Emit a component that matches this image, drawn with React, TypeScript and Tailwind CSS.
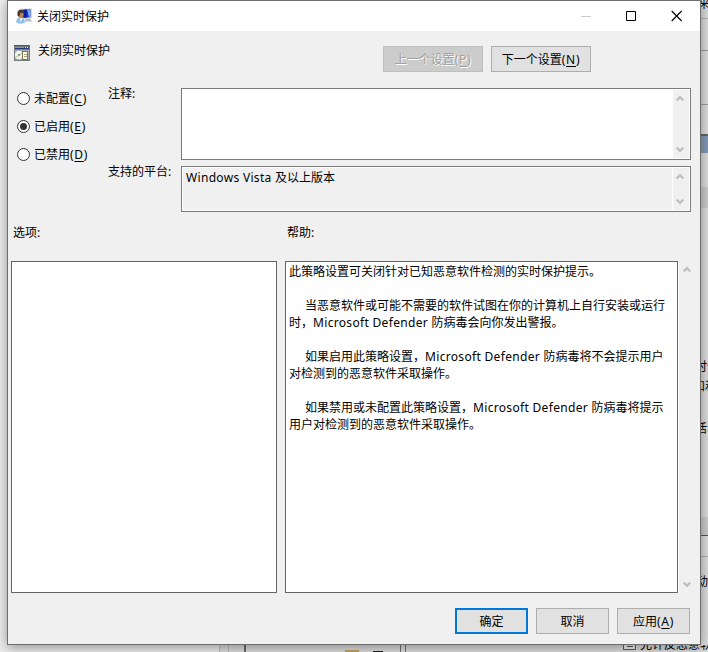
import React from 'react';
import clsx from 'clsx';

interface AccessLabelProps {
  text: string;
  accessKey: string;
}

const AccessLabel: React.FC<AccessLabelProps> = ({ text, accessKey }) => (
  <span className="whitespace-pre">
    {text}
    <span className="tracking-[0.7px]">
      (<span className="underline underline-offset-2">{accessKey}</span>)
    </span>
  </span>
);

interface DialogButtonProps {
  children: React.ReactNode;
  className?: string;
  variant?: 'normal' | 'primary' | 'disabled';
}

const DialogButton: React.FC<DialogButtonProps> = ({ children, className, variant = 'normal' }) => (
  <button
    disabled={variant === 'disabled'}
    className={clsx(
      'flex h-[26px] items-center justify-center',
      variant === 'normal' && 'border border-[#adadad] bg-[#e1e1e1]',
      variant === 'primary' && 'border-2 border-[#0078d7] bg-[#e1e1e1]',
      variant === 'disabled' &&
        'border border-[#bfbfbf] bg-[#cccccc] text-[#a0a0a0] [text-shadow:1px_1px_0_#ffffff]',
      className
    )}
  >
    {children}
  </button>
);

const Chevron: React.FC<{ down?: boolean }> = ({ down }) => (
  <svg width="8" height="7" viewBox="0 0 8 7" className={clsx('shrink-0', down && 'rotate-180')}>
    <path d="M0.7 5.4 4 2.1 7.3 5.4" fill="none" stroke="#bfbfbf" strokeWidth="2.3" />
  </svg>
);

interface RadioProps {
  text: string;
  accessKey: string;
  checked?: boolean;
}

const Radio: React.FC<RadioProps> = ({ text, accessKey, checked }) => (
  <label className="flex h-7 items-center gap-1">
    <span className="flex size-[13px] items-center justify-center rounded-full border border-[#333333] bg-white">
      {checked && <span className="size-[7px] rounded-full bg-[#333333]" />}
    </span>
    <AccessLabel text={text} accessKey={accessKey} />
  </label>
);

const PolicyIcon = () => (
  <svg width="16" height="16" viewBox="0 0 16 16">
    <path d="M4 0.8 15.8 0.3v10L5 11z" fill="#d5d9df" />
    <path d="M5.5 1.8 14.7 1.2v8.1L6 9.8z" fill="#1238c8" />
    <path d="M11 1.5 14.7 1.2v8.1L13 9.4z" fill="#82a6f2" />
    <path d="M8 1.7h3l-.5 8H8z" fill="#0a1fa0" />
    <path d="M9 10.5h5l2 3H9z" fill="#b9bdc5" />
    <path d="M0.3 14.5c0-4 1.7-5 4.2-5s4.3 1.5 4.5 5c-2 1.5-6.5 1.5-8.7 0z" fill="#8cc0e6" />
    <path d="m3.8 10 1 4.5 1.6-4.5z" fill="#f4f8fb" />
    <ellipse cx="4.8" cy="6.4" rx="2.7" ry="3.7" fill="#b98352" />
    <path d="M1.7 8C0.8 3.7 2.3 1.6 4.8 1.8c2.2.1 3 1.6 2.7 3.2L4.4 4.8 3.3 8.6z" fill="#4a3526" />
  </svg>
);

const SettingIcon = () => (
  <svg width="16" height="16" viewBox="0 0 16 16" shapeRendering="crispEdges">
    <path d="M0 0h16v16H0z" fill="#737b80" />
    <path d="M0 0h16v1H0z" fill="#355f70" />
    <path d="M1 2h14v2H1z" fill="#26387e" />
    <path d="M1 2h9v1H1z" fill="#8791bd" />
    <path d="M11 2h1v1h-1zM13 2h1v1h-1z" fill="#ffffff" />
    <path d="M1 5h14v10H1z" fill="#a9afae" />
    <circle cx="5" cy="10" r="4.2" fill="#f1f4ea" shapeRendering="auto" />
    <path d="m5 10 2-3 1 2zM5 10l-3 1 1 2z" fill="#bad4ab" />
    <path d="M4 9h2v2H4z" fill="#8b9599" />
    <path d="M8 6h6v9H8z" fill="#7b7551" />
    <path d="M9 7h4v7H9z" fill="#fffbe5" />
    <path d="M10 9h3v1h-3zM10 11h3v1h-3z" fill="#a6a07e" />
  </svg>
);

interface ScrollBoxProps {
  children?: React.ReactNode;
  className?: string;
}

const ScrollBox: React.FC<ScrollBoxProps> = ({ children, className }) => (
  <div className={clsx('flex border border-[#7a7a7a] bg-white p-px', className)}>
    {children}
    <div className="flex w-4 shrink-0 flex-col items-center justify-between bg-[#f0f0f0] py-[5px] pr-0.5">
      <Chevron />
      <Chevron down />
    </div>
  </div>
);

// Latin runs are set a little wider than the Chinese around them
const MixedText: React.FC<{ text: string }> = ({ text }) => (
  <>
    {text.split(/([A-Za-z ]+)/).map((part, i) => (
      <span key={i} className={clsx(i % 2 === 1 && 'tracking-[0.32px]')}>
        {part}
      </span>
    ))}
  </>
);

const helpLines = [
  { text: '此策略设置可关闭针对已知恶意软件检测的实时保护提示。' },
  { text: '' },
  { text: '当恶意软件或可能不需要的软件试图在你的计算机上自行安装或运行', indent: true },
  { text: '时，Microsoft Defender 防病毒会向你发出警报。' },
  { text: '' },
  { text: '如果启用此策略设置，Microsoft Defender 防病毒将不会提示用户', indent: true },
  { text: '对检测到的恶意软件采取操作。' },
  { text: '' },
  { text: '如果禁用或未配置此策略设置，Microsoft Defender 防病毒将提示', indent: true },
  { text: '用户对检测到的恶意软件采取操作。' },
];

// Windows lying behind the dialog, visible only along its edges
const Backdrop = () => (
  <div className="absolute inset-0">
    <div className="absolute top-0 right-0 flex h-full w-2 flex-col overflow-hidden bg-[#dedede]">
      <div className="h-[19px] shrink-0 border-b border-[#b5b5b5] leading-[8px]">
        <span className="-ml-0.5">来</span>
      </div>
      <div className="h-[32px] shrink-0 border-b border-[#9b9b9b]" />
      <div className="h-[54px] shrink-0 border-b border-[#9b9b9b]" />
      <div className="h-[31px] shrink-0 border-b-2 border-[#666666]" />
      <div className="h-[17px] shrink-0 bg-[#839bb8]" />
      <div className="h-[34px] shrink-0" />
      <div className="h-[21px] shrink-0 bg-[#cccccc]" />
      <div className="h-[150px] shrink-0" />
      <div className="h-[20px] shrink-0 whitespace-nowrap"><span className="-ml-[5px]">时使</span></div>
      <div className="h-[42px] shrink-0 whitespace-nowrap"><span className="-ml-[7px]">和和</span></div>
      <div className="h-[97px] shrink-0 whitespace-nowrap"><span className="-ml-[5px]">活动</span></div>
      <div className="h-[19px] shrink-0 border-b border-[#555555] bg-[#cccccc]" />
      <div className="h-[21px] shrink-0 border-b border-[#b0b0b0]" />
      <div className="h-[16px] shrink-0" />
      <div className="h-[20px] shrink-0 whitespace-nowrap"><span className="-ml-1">动</span></div>
    </div>
    <div className="absolute bottom-0 left-0 flex h-[7px] w-full overflow-hidden bg-[#dcdcdc]">
      <div className="w-[220px] shrink-0 border-r border-[#bbbbbb] bg-[#ececec]" />
      <div className="w-[9px] shrink-0 border-r border-[#bbbbbb]" />
      <div className="w-[17px] shrink-0 border-r-2 border-[#6b6b70]" />
      <div className="mt-[5px] ml-[99px] h-0.5 w-3.5 shrink-0 bg-[#c7a260]" />
      <div className="mt-[6px] ml-[14px] h-px w-2.5 shrink-0 bg-[#222222]" />
      <div className="ml-[17px] w-[6px] shrink-0 border-x border-[#707078]" />
      <div className="ml-[217px] h-[5px] w-[13px] shrink-0 border border-t-0 border-[#606060] bg-[#eeeeee]">
        <div className="mt-px ml-[3px] h-px w-1.5 bg-[#555555]" />
      </div>
      <div className="-mt-[9px] ml-1 shrink-0 whitespace-nowrap">允许反恶意软件</div>
    </div>
  </div>
);

const App: React.FC = () => {
  return (
    <div className="relative h-[652px] w-[708px] overflow-hidden bg-[#efefef] pl-[7px] font-['Noto_Sans','Noto_Sans_CJK_SC',sans-serif] text-[12px] leading-[17px] text-black">
      <Backdrop />
      <div className="relative flex h-[645px] w-[694px] flex-col border border-[#6e6e6e] bg-[#f0f0f0] shadow-[0_2px_12px_rgba(0,0,0,0.4)]">
        <header className="flex h-[30px] shrink-0 items-center bg-white pr-[18px] pl-2">
          <PolicyIcon />
          <h1 className="ml-[5px] grow">关闭实时保护</h1>
          <svg width="102" height="12" viewBox="0 0 102 12" fill="none" className="-mt-px">
            <path d="M1 6.5h10" stroke="#cccccc" />
            <path d="M46.5 1.5h9v9h-9z" stroke="#000000" />
            <path d="m91.7 1 10 10m0-10-10 10" stroke="#000000" strokeWidth="1.2" />
          </svg>
        </header>

        <div className="flex h-[57px] shrink-0 items-start pl-1.5">
          <div className="mt-[14px]">
            <SettingIcon />
          </div>
          <h2 className="mt-[11px] ml-2 w-[345px]">关闭实时保护</h2>
          <div className="mt-[15px] flex gap-2">
            <DialogButton variant="disabled" className="w-[100px]">
              <AccessLabel text="上一个设置" accessKey="P" />
            </DialogButton>
            <DialogButton className="w-[100px]">
              <AccessLabel text="下一个设置" accessKey="N" />
            </DialogButton>
          </div>
        </div>

        <div className="flex h-[124px] shrink-0 pl-[9px]">
          <div className="-mt-1 w-[91px]">
            <Radio text="未配置" accessKey="C" />
            <Radio text="已启用" accessKey="E" checked />
            <Radio text="已禁用" accessKey="D" />
          </div>
          <div className="grid w-[583px] grid-cols-[73px_510px] grid-rows-[72px_46px] gap-y-1.5">
            <span className="-mt-[3px]">注释:</span>
            <ScrollBox className="justify-end" />
            <span className="-mt-[3px]">支持的平台:</span>
            <ScrollBox>
              <div className="mr-px grow bg-[#f0f0f0] pt-px pl-[3px]">
                <MixedText text="Windows Vista 及以上版本" />
              </div>
            </ScrollBox>
          </div>
        </div>

        <div className="flex h-[49px] shrink-0 pt-3 pl-[5px]">
          <span className="w-[274px]">选项:</span>
          <span>帮助:</span>
        </div>

        <div className="flex h-[332px] shrink-0 pl-[3px]">
          <div className="w-[266px] border border-[#646464] bg-white" />
          <div className="ml-2 w-[393px] border border-[#646464] bg-white pt-px pl-[3px]">
            {helpLines.map((line, i) => (
              <p key={i} className={clsx('h-[17px] whitespace-nowrap', line.indent && 'pl-4')}>
                <MixedText text={line.text} />
              </p>
            ))}
          </div>
          <div className="flex w-[17px] flex-col items-center justify-between border-l border-white py-[5px] pr-px">
            <Chevron />
            <Chevron down />
          </div>
        </div>

        <footer className="mt-[15px] flex justify-end gap-2 pr-[10px]">
          <DialogButton variant="primary" className="w-[73px]">确定</DialogButton>
          <DialogButton className="w-[73px]">取消</DialogButton>
          <DialogButton className="w-[73px]">
            <AccessLabel text="应用" accessKey="A" />
          </DialogButton>
        </footer>
      </div>
    </div>
  );
};

export default App;
